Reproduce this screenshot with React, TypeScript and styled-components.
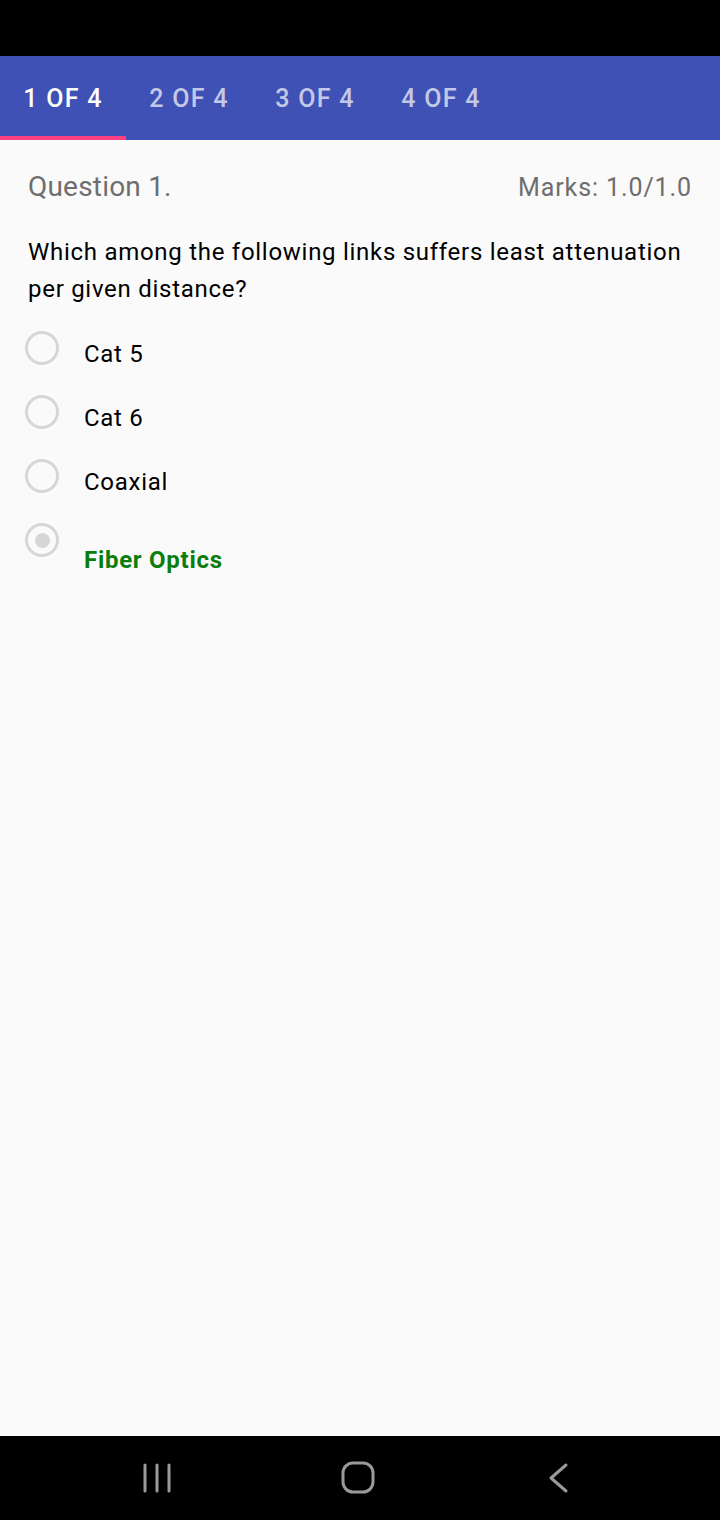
import React from "react";
import styled, { createGlobalStyle } from "styled-components";

const Global = createGlobalStyle`
  html, body { margin: 0; padding: 0; background: #000; }
  body { font-family: Roboto, "Noto Sans", sans-serif; }
  * { box-sizing: border-box; }
`;

const Screen = styled.div`
  width: 720px;
  height: 1520px;
  display: flex;
  flex-direction: column;
  background: #fafafa;
  overflow: hidden;
`;

const StatusBar = styled.div`
  height: 56px;
  background: #000;
  flex: none;
`;

const TabBar = styled.div`
  height: 84px;
  background: #3f51b5;
  display: flex;
  flex: none;
`;

const Tab = styled.div<{ $active?: boolean }>`
  position: relative;
  width: 126px;
  display: flex;
  align-items: center;
  justify-content: center;
  font-family: Roboto, sans-serif;
  font-weight: 500;
  font-size: 25px;
  letter-spacing: 1.3px;
  color: ${(p) => (p.$active ? "#ffffff" : "rgba(255,255,255,0.7)")};
  &::after {
    content: "";
    position: absolute;
    left: 0;
    right: 0;
    bottom: 0;
    height: 4px;
    background: ${(p) => (p.$active ? "#ff4081" : "transparent")};
  }
`;

const Content = styled.div`
  flex: 1;
  padding: 32px 28px 0 28px;
  display: flex;
  flex-direction: column;
`;

const HeaderRow = styled.div`
  display: flex;
  justify-content: space-between;
  align-items: baseline;
  line-height: 30px;
  color: #6e6e6e;
`;

const QuestionTitle = styled.span`
  font-size: 28px;
  letter-spacing: 0.2px;
`;

const Marks = styled.span`
  font-size: 25px;
  letter-spacing: 0.9px;
`;

const QuestionText = styled.p`
  margin: 31px 0 0 0;
  font-size: 24px;
  line-height: 37px;
  letter-spacing: 0.72px;
  color: #000;
`;

const OptionList = styled.div`
  margin: 8px 0 0 -3px;
  display: flex;
  flex-direction: column;
`;

const OptionRow = styled.div`
  height: 64px;
  display: flex;
  align-items: flex-start;
`;

const Radio = styled.div<{ $checked?: boolean }>`
  width: 34px;
  height: 34px;
  margin-top: 15px;
  border-radius: 50%;
  border: 3px solid #d6d6d6;
  flex: none;
  display: flex;
  align-items: center;
  justify-content: center;
  &::after {
    content: "";
    width: 15px;
    height: 15px;
    border-radius: 50%;
    background: ${(p) => (p.$checked ? "#d6d6d6" : "transparent")};
  }
`;

const Label = styled.span<{ $correct?: boolean }>`
  margin-left: 25px;
  margin-top: ${(p) => (p.$correct ? "38px" : "24px")};
  font-size: 24px;
  line-height: 28px;
  letter-spacing: 0.72px;
  font-weight: ${(p) => (p.$correct ? 700 : 400)};
  color: ${(p) => (p.$correct ? "#0a7d0a" : "#000")};
  white-space: nowrap;
`;

const NavBar = styled.div`
  height: 84px;
  flex: none;
  background: #000;
  display: flex;
  justify-content: center;
  align-items: center;
  gap: 141px;
  padding-right: 4px;
`;

const NavButton = styled.div`
  width: 60px;
  height: 60px;
  display: flex;
  align-items: center;
  justify-content: center;
`;

const options = [
  { label: "Cat 5" },
  { label: "Cat 6" },
  { label: "Coaxial" },
  { label: "Fiber Optics", checked: true, correct: true },
];

export default function App() {
  return (
    <>
      <Global />
      <Screen>
        <StatusBar />
        <TabBar>
          <Tab $active>1 OF 4</Tab>
          <Tab>2 OF 4</Tab>
          <Tab>3 OF 4</Tab>
          <Tab>4 OF 4</Tab>
        </TabBar>
        <Content>
          <HeaderRow>
            <QuestionTitle>Question 1.</QuestionTitle>
            <Marks>Marks: 1.0/1.0</Marks>
          </HeaderRow>
          <QuestionText>
            Which among the following links suffers least attenuation per given distance?
          </QuestionText>
          <OptionList>
            {options.map((o) => (
              <OptionRow key={o.label}>
                <Radio $checked={o.checked} />
                <Label $correct={o.correct}>{o.label}</Label>
              </OptionRow>
            ))}
          </OptionList>
        </Content>
        <NavBar>
          <NavButton>
            <svg width="30" height="32" viewBox="0 0 30 32">
              <g stroke="#9a9a9a" strokeWidth="3" strokeLinecap="round">
                <line x1="3" y1="3" x2="3" y2="29" />
                <line x1="15" y1="3" x2="15" y2="29" />
                <line x1="27" y1="3" x2="27" y2="29" />
              </g>
            </svg>
          </NavButton>
          <NavButton>
            <svg width="34" height="34" viewBox="0 0 34 34">
              <rect x="2" y="2" width="30" height="29" rx="10" fill="none" stroke="#9a9a9a" strokeWidth="3" />
            </svg>
          </NavButton>
          <NavButton>
            <svg width="24" height="32" viewBox="0 0 24 32">
              <polyline points="19,3 4,16 19,29" fill="none" stroke="#9a9a9a" strokeWidth="3" strokeLinecap="round" strokeLinejoin="round" />
            </svg>
          </NavButton>
        </NavBar>
      </Screen>
    </>
  );
}
